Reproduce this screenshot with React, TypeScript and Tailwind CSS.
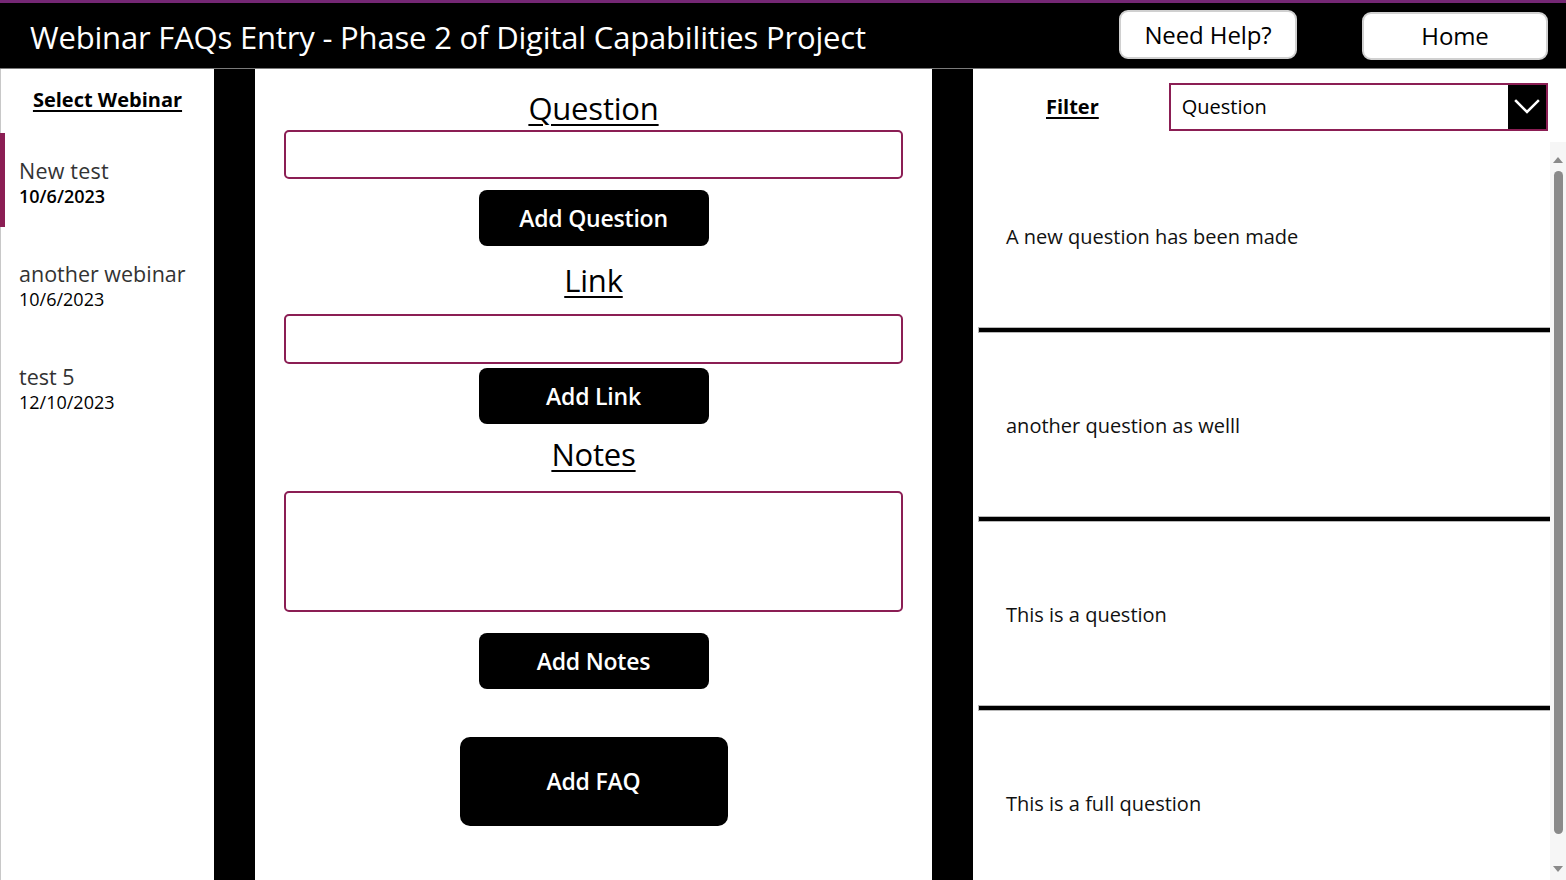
import React from "react";

const webinars = [
  { name: "New test", date: "10/6/2023", selected: true },
  { name: "another webinar", date: "10/6/2023", selected: false },
  { name: "test 5", date: "12/10/2023", selected: false },
];

const faqs = [
  "A new question has been made",
  "another question as welll",
  "This is a question",
  "This is a full question",
];

function BlackButton({ label, className }: { label: string; className: string }) {
  return (
    <button
      className={`bg-black text-white font-semibold flex items-center justify-center text-[23px] tracking-[-0.2px] ${className}`}
    >
      {label}
    </button>
  );
}

export default function App() {
  return (
    <div className="w-[1566px] h-[880px] overflow-hidden bg-white flex flex-col font-['Open_Sans',sans-serif]">
      {/* Header */}
      <header className="h-[69px] shrink-0 bg-black border-t-[3px] border-t-[#742774] border-b border-b-[#7a7a7a] flex items-center">
        <h1 className="ml-[30px] text-white text-[31px] tracking-[-0.18px] leading-none mt-[3px]">
          Webinar FAQs Entry - Phase 2 of Digital Capabilities Project
        </h1>
        <div className="ml-auto flex items-center">
          <button className="w-[178px] h-[49px] bg-white rounded-[9px] border-2 border-[#d0d0d0] text-black text-[24px] tracking-[-0.1px] flex items-center justify-center -mt-[2px]">
            Need Help?
          </button>
          <button className="ml-[65px] mr-[18px] w-[186px] h-[48px] bg-white rounded-[9px] border-2 border-[#d0d0d0] text-black text-[24px] tracking-[-0.1px] flex items-center justify-center">
            Home
          </button>
        </div>
      </header>

      <div className="flex flex-1 min-h-0">
        {/* Sidebar */}
        <aside className="w-[214px] shrink-0 border-l border-[#c8c8c8] flex flex-col">
          <div className="pt-[16px] text-center">
            <span className="font-bold text-[20px] underline underline-offset-[3px] text-black">
              Select Webinar
            </span>
          </div>
          <div className="mt-[18px] flex flex-col">
            {webinars.map((w) =>
              w.selected ? (
                <div
                  key={w.name}
                  className="-ml-[1px] h-[94px] mb-[9px] border-l-[5px] border-[#8b1e54] pl-[14px] pt-[25px] flex flex-col"
                >
                  <div className="text-[21.5px] leading-[26px] text-[#333333] tracking-[0.2px]">{w.name}</div>
                  <div className="text-[18px] leading-[24px] text-black font-semibold">{w.date}</div>
                </div>
              ) : (
                <div key={w.name} className="h-[103px] pl-[18px] pt-[25px] flex flex-col">
                  <div className="text-[21.5px] leading-[26px] text-[#333333]">{w.name}</div>
                  <div className="text-[18px] leading-[24px] text-black">{w.date}</div>
                </div>
              )
            )}
          </div>
        </aside>

        <div className="w-[41px] shrink-0 bg-black" />

        {/* Center */}
        <main className="w-[677px] shrink-0 flex flex-col items-center">
          <h2 className="mt-[19px] text-[31px] leading-[40px] underline underline-offset-[4px] decoration-[2px] text-black tracking-[-0.2px]">
            Question
          </h2>
          <div className="mt-[2px] w-[619px] h-[49px] border-2 border-[#8b1e54] rounded-[5px]" />
          <BlackButton label="Add Question" className="mt-[11px] w-[230px] h-[56px] rounded-[8px]" />
          <h2 className="mt-[14px] text-[31px] leading-[40px] underline underline-offset-[4px] decoration-[2px] text-black tracking-[-0.2px]">
            Link
          </h2>
          <div className="mt-[14px] w-[619px] h-[50px] border-2 border-[#8b1e54] rounded-[5px]" />
          <BlackButton label="Add Link" className="mt-[4px] w-[230px] h-[56px] rounded-[8px]" />
          <h2 className="mt-[10px] text-[31px] leading-[40px] underline underline-offset-[4px] decoration-[2px] text-black tracking-[-0.2px]">
            Notes
          </h2>
          <div className="mt-[17px] w-[619px] h-[121px] border-2 border-[#8b1e54] rounded-[5px]" />
          <BlackButton label="Add Notes" className="mt-[21px] w-[230px] h-[56px] rounded-[8px]" />
          <BlackButton label="Add FAQ" className="mt-[48px] w-[268px] h-[89px] rounded-[10px]" />
        </main>

        <div className="w-[41px] shrink-0 bg-black" />

        {/* Right panel */}
        <section className="flex-1 min-w-0 flex flex-col">
          <div className="h-[73px] shrink-0 flex items-center">
            <span className="ml-[73px] font-bold text-[20px] underline underline-offset-[3px] text-black mt-[3px]">
              Filter
            </span>
            <div className="ml-[70px] w-[379px] h-[48px] border-2 border-[#8b1e54] flex items-center mt-[2px]">
              <span className="ml-[11px] text-[20px] text-black flex-1">Question</span>
              <div className="w-[38px] h-full bg-black flex items-center justify-center">
                <svg width="26" height="15" viewBox="0 0 26 15" fill="none">
                  <path d="M2 2 L13 13 L24 2" stroke="white" strokeWidth="2.5" strokeLinecap="square" />
                </svg>
              </div>
            </div>
          </div>
          <div className="flex-1 min-h-0 flex">
            <div className="flex-1 min-w-0 flex flex-col pt-[1px]">
              {faqs.map((q) => (
                <div key={q} className="shrink-0 flex flex-col">
                  <div className="h-[185px] flex items-center pl-[33px] pt-[2px] text-[20px] text-[#111]">
                    {q}
                  </div>
                  <div className="ml-[6px] h-[4px] bg-black outline outline-1 outline-[#b8b8b8]" />
                </div>
              ))}
            </div>
            <div className="w-[16px] shrink-0 bg-[#f6f6f6] flex flex-col items-center">
              <div className="mt-[15px] w-0 h-0 border-l-[5px] border-r-[5px] border-b-[6px] border-l-transparent border-r-transparent border-b-[#8a8a8a]" />
              <div className="mt-[8px] w-[9px] h-[663px] bg-[#8a8a8a] rounded-full" />
              <div className="mt-auto mb-[8px] w-0 h-0 border-l-[5px] border-r-[5px] border-t-[6px] border-l-transparent border-r-transparent border-t-[#8a8a8a]" />
            </div>
          </div>
        </section>
      </div>
    </div>
  );
}
